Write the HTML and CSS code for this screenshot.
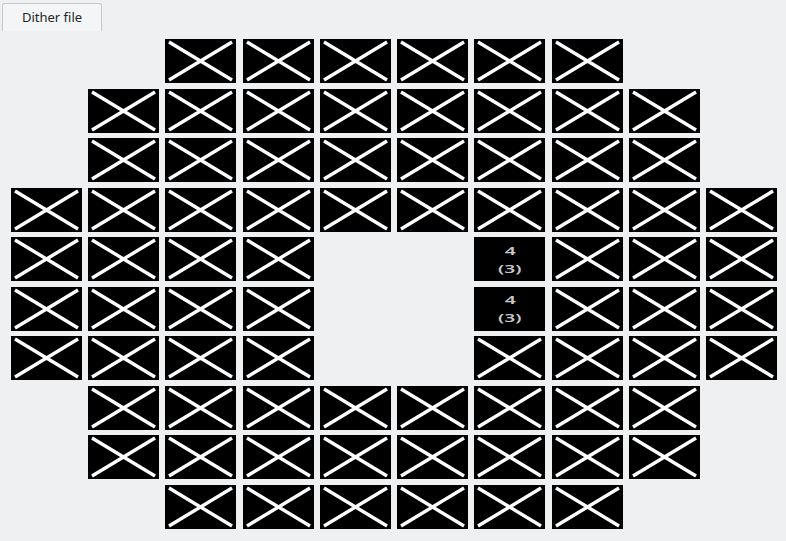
FILE: index.html
```html
<!DOCTYPE html>
<html>
<head>
<meta charset="utf-8">
<link rel="stylesheet" href="styles.css">
</head>
<body>
<svg class="defs" width="0" height="0">
  <symbol id="x" viewBox="0 0 71 44" preserveAspectRatio="none">
    <path d="M4 3 L67 41 M67 3 L4 41" stroke="#fff" stroke-width="3.4" fill="none"/>
  </symbol>
</svg>
<div class="tabbar"><div class="tab">Dither file</div></div>
<div class="grid">
  <div class="e"></div><div class="e"></div>
  <div class="c"><svg><use href="#x"/></svg></div><div class="c"><svg><use href="#x"/></svg></div><div class="c"><svg><use href="#x"/></svg></div><div class="c"><svg><use href="#x"/></svg></div><div class="c"><svg><use href="#x"/></svg></div><div class="c"><svg><use href="#x"/></svg></div>
  <div class="e"></div><div class="e"></div>

  <div class="e"></div>
  <div class="c"><svg><use href="#x"/></svg></div><div class="c"><svg><use href="#x"/></svg></div><div class="c"><svg><use href="#x"/></svg></div><div class="c"><svg><use href="#x"/></svg></div><div class="c"><svg><use href="#x"/></svg></div><div class="c"><svg><use href="#x"/></svg></div><div class="c"><svg><use href="#x"/></svg></div><div class="c"><svg><use href="#x"/></svg></div>
  <div class="e"></div>

  <div class="e"></div>
  <div class="c"><svg><use href="#x"/></svg></div><div class="c"><svg><use href="#x"/></svg></div><div class="c"><svg><use href="#x"/></svg></div><div class="c"><svg><use href="#x"/></svg></div><div class="c"><svg><use href="#x"/></svg></div><div class="c"><svg><use href="#x"/></svg></div><div class="c"><svg><use href="#x"/></svg></div><div class="c"><svg><use href="#x"/></svg></div>
  <div class="e"></div>

  <div class="c"><svg><use href="#x"/></svg></div><div class="c"><svg><use href="#x"/></svg></div><div class="c"><svg><use href="#x"/></svg></div><div class="c"><svg><use href="#x"/></svg></div><div class="c"><svg><use href="#x"/></svg></div><div class="c"><svg><use href="#x"/></svg></div><div class="c"><svg><use href="#x"/></svg></div><div class="c"><svg><use href="#x"/></svg></div><div class="c"><svg><use href="#x"/></svg></div><div class="c"><svg><use href="#x"/></svg></div>

  <div class="c"><svg><use href="#x"/></svg></div><div class="c"><svg><use href="#x"/></svg></div><div class="c"><svg><use href="#x"/></svg></div><div class="c"><svg><use href="#x"/></svg></div>
  <div class="e"></div><div class="e"></div>
  <div class="c t"><span>4</span><span>(3)</span></div>
  <div class="c"><svg><use href="#x"/></svg></div><div class="c"><svg><use href="#x"/></svg></div><div class="c"><svg><use href="#x"/></svg></div>

  <div class="c"><svg><use href="#x"/></svg></div><div class="c"><svg><use href="#x"/></svg></div><div class="c"><svg><use href="#x"/></svg></div><div class="c"><svg><use href="#x"/></svg></div>
  <div class="e"></div><div class="e"></div>
  <div class="c t"><span>4</span><span>(3)</span></div>
  <div class="c"><svg><use href="#x"/></svg></div><div class="c"><svg><use href="#x"/></svg></div><div class="c"><svg><use href="#x"/></svg></div>

  <div class="c"><svg><use href="#x"/></svg></div><div class="c"><svg><use href="#x"/></svg></div><div class="c"><svg><use href="#x"/></svg></div><div class="c"><svg><use href="#x"/></svg></div>
  <div class="e"></div><div class="e"></div>
  <div class="c"><svg><use href="#x"/></svg></div><div class="c"><svg><use href="#x"/></svg></div><div class="c"><svg><use href="#x"/></svg></div><div class="c"><svg><use href="#x"/></svg></div>

  <div class="e"></div>
  <div class="c"><svg><use href="#x"/></svg></div><div class="c"><svg><use href="#x"/></svg></div><div class="c"><svg><use href="#x"/></svg></div><div class="c"><svg><use href="#x"/></svg></div><div class="c"><svg><use href="#x"/></svg></div><div class="c"><svg><use href="#x"/></svg></div><div class="c"><svg><use href="#x"/></svg></div><div class="c"><svg><use href="#x"/></svg></div>
  <div class="e"></div>

  <div class="e"></div>
  <div class="c"><svg><use href="#x"/></svg></div><div class="c"><svg><use href="#x"/></svg></div><div class="c"><svg><use href="#x"/></svg></div><div class="c"><svg><use href="#x"/></svg></div><div class="c"><svg><use href="#x"/></svg></div><div class="c"><svg><use href="#x"/></svg></div><div class="c"><svg><use href="#x"/></svg></div><div class="c"><svg><use href="#x"/></svg></div>
  <div class="e"></div>

  <div class="e"></div><div class="e"></div>
  <div class="c"><svg><use href="#x"/></svg></div><div class="c"><svg><use href="#x"/></svg></div><div class="c"><svg><use href="#x"/></svg></div><div class="c"><svg><use href="#x"/></svg></div><div class="c"><svg><use href="#x"/></svg></div><div class="c"><svg><use href="#x"/></svg></div>
  <div class="e"></div><div class="e"></div>
</div>
</body>
</html>
```
FILE: styles.css
```css
html, body {
  margin: 0;
  padding: 0;
  background: #eff0f1;
}
body {
  width: 786px;
  height: 541px;
  overflow: hidden;
  font-family: "Noto Sans", "DejaVu Sans", sans-serif;
}
.defs {
  position: absolute;
  width: 0;
  height: 0;
}
.tabbar {
  display: flex;
  padding: 3px 0 0 2px;
  height: 28px;
}
.tab {
  box-sizing: border-box;
  width: 100px;
  height: 28px;
  border: 1px solid #c6c7c9;
  border-bottom: none;
  border-radius: 3px 3px 0 0;
  background: #f4f5f6;
  color: #232629;
  font-size: 13px;
  line-height: 27px;
  text-align: center;
}
.grid {
  display: grid;
  grid-template-columns: repeat(10, 1fr);
  grid-template-rows: repeat(10, 44px);
  column-gap: 6.2px;
  row-gap: 5.55px;
  width: 766px;
  margin: 8px 0 0 11px;
}
.c {
  background: #000;
  display: flex;
}
.c svg {
  width: 100%;
  height: 100%;
  display: block;
}
.t {
  flex-direction: column;
  align-items: center;
  justify-content: center;
  color: #c8c8c8;
  font-size: 11px;
  font-weight: 600;
  line-height: 18px;
  padding: 1px 0 0 0;
}
.t span {
  display: block;
  transform: scaleX(1.75);
}
```
